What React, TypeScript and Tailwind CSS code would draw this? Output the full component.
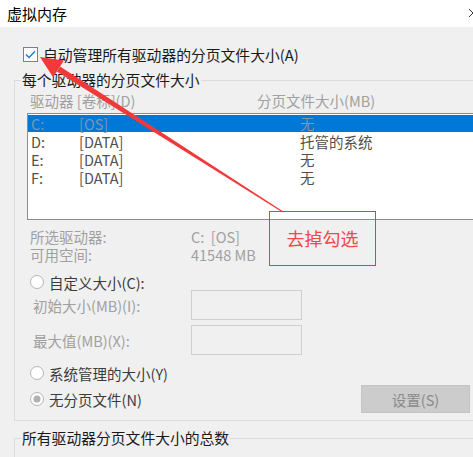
import React from "react"

type Drive = { letter: string; label: string; size: string; selected?: boolean }

const DRIVES: Drive[] = [
  { letter: "C:", label: "[OS]", size: "无", selected: true },
  { letter: "D:", label: "[DATA]", size: "托管的系统" },
  { letter: "E:", label: "[DATA]", size: "无" },
  { letter: "F:", label: "[DATA]", size: "无" },
]

function Radio({ checked }: { checked?: boolean }) {
  return (
    <svg width="14" height="14" viewBox="0 0 14 14" className="shrink-0">
      <circle cx="7" cy="7" r="6.5" fill="#fff" stroke="#b4b4b4" />
      {checked && <circle cx="7" cy="7" r="3.5" fill="#b0b0b0" />}
    </svg>
  )
}

function Checkbox() {
  return (
    <svg width="15" height="15" viewBox="0 0 15 15" className="shrink-0">
      <rect x="0.5" y="0.5" width="14" height="14" fill="#fff" stroke="#3d8ee0" />
      <path d="M3 7.6 L6 10.4 L12 4.2" fill="none" stroke="#1e78d2" strokeWidth="1.4" />
    </svg>
  )
}

export default function App() {
  return (
    <div className="relative h-[457px] w-[473px] overflow-hidden bg-[#f0f0f0] font-['Noto_Sans_CJK_SC',sans-serif] text-[14.5px] leading-[17px] text-[#222]">
      {/* title bar */}
      <div className="relative flex h-[27px] items-center bg-white pl-[7px] text-[15px] text-black">
        虚拟内存
        <svg className="absolute right-[-5px] top-[8px]" width="10" height="10" viewBox="0 0 10 10">
          <path d="M1 1 L9 9 M9 1 L1 9" stroke="#333" strokeWidth="1" />
        </svg>
      </div>

      <div className="pl-[14px]">
        <label className="ml-[9px] mt-[20px] flex h-[15px] items-center gap-[5px] text-[14.8px] text-[#1a1a1a]">
          <Checkbox />
          自动管理所有驱动器的分页文件大小(A)
        </label>

        <fieldset className="mr-[-14px] mt-[9px] border border-[#dcdcdc] pb-[7px] pl-[6px]">
          <legend className="px-[1px] text-[14.8px] leading-[18px] text-[#1a1a1a]">每个驱动器的分页文件大小</legend>

          <div className="mt-[2px] flex h-[18px] items-center pl-[9px] text-[#a0a0a0]">
            <span className="w-[227px]">驱动器 [卷标](D)</span>
            <span>分页文件大小(MB)</span>
          </div>

          <div className="ml-[6px] mt-[4px] h-[107px] border border-[#8c8c8c] bg-white pt-[1px]">
            {DRIVES.map((d) => (
              <div
                key={d.letter}
                className={
                  d.selected
                    ? "flex h-[17px] items-center bg-[#0078d7] pl-[3px] leading-[17px] text-[#7f94ad]"
                    : "flex h-[18px] items-center pl-[3px] leading-[17px] text-[#505050]"
                }
              >
                <span className="w-[48px]">{d.letter}</span>
                <span className="w-[221px]">{d.label}</span>
                <span>{d.size}</span>
              </div>
            ))}
          </div>

          <div className="mt-[7px] pl-[9px] text-[#a0a0a0]">
            <div className="flex h-[18px] items-center">
              <span className="w-[161px]">所选驱动器:</span>
              <span>C:&nbsp; [OS]</span>
            </div>
            <div className="flex h-[18px] items-center">
              <span className="w-[161px]">可用空间:</span>
              <span>41548 MB</span>
            </div>
          </div>

          <div className="mt-[11px] flex h-[16px] items-center gap-[5px] pl-[9px] text-[#3c3c3c]">
            <Radio />
            自定义大小(C):
          </div>

          <div className="flex h-[30px] items-center pl-[12px] text-[#a0a0a0]">
            <span className="w-[158px]">初始大小(MB)(I):</span>
            <span className="h-[30px] w-[111px] border border-[#cfcfcf] bg-[#f0f0f0]" />
          </div>
          <div className="mt-[5px] flex h-[30px] items-center pl-[12px] text-[#a0a0a0]">
            <span className="w-[158px]">最大值(MB)(X):</span>
            <span className="h-[30px] w-[111px] border border-[#cfcfcf] bg-[#f0f0f0]" />
          </div>

          <div className="mt-[10px] flex h-[16px] items-center gap-[5px] pl-[9px] text-[#3c3c3c]">
            <Radio />
            系统管理的大小(Y)
          </div>

          <div className="mt-[4px] flex h-[28px] items-center pl-[9px]">
            <div className="flex w-[331px] items-center gap-[5px] text-[#3c3c3c]">
              <Radio checked />
              无分页文件(N)
            </div>
            <button className="flex h-[28px] w-[109px] items-center justify-center border border-[#c4c4c4] bg-[#cccccc] text-[#8a8a8a]">
              设置(S)
            </button>
          </div>
        </fieldset>

        <fieldset className="mr-[-14px] mt-[8px] h-[40px] border border-[#dcdcdc] pl-[6px]">
          <legend className="px-[1px] text-[14.8px] leading-[18px] text-[#1a1a1a]">所有驱动器分页文件大小的总数</legend>
        </fieldset>
      </div>

      {/* annotation: red callout box and arrow drawn over the dialog */}
      <svg className="pointer-events-none absolute left-0 top-0" width="473" height="457" viewBox="0 0 473 457">
        <rect x="269.5" y="211.5" width="106" height="54" fill="none" stroke="#f03a3a" />
        <polygon points="60.1,66.4 283.3,211.6 282.7,212.4 56.9,71.4" fill="#f03a3a" />
        <polygon points="40,57 63.9,60.5 53.1,77.3" fill="#f03a3a" />
      </svg>
      <div className="absolute left-[269px] top-[211px] flex h-[55px] w-[107px] items-center justify-center text-[18px] text-[#f24848]">
        去掉勾选
      </div>
    </div>
  )
}
